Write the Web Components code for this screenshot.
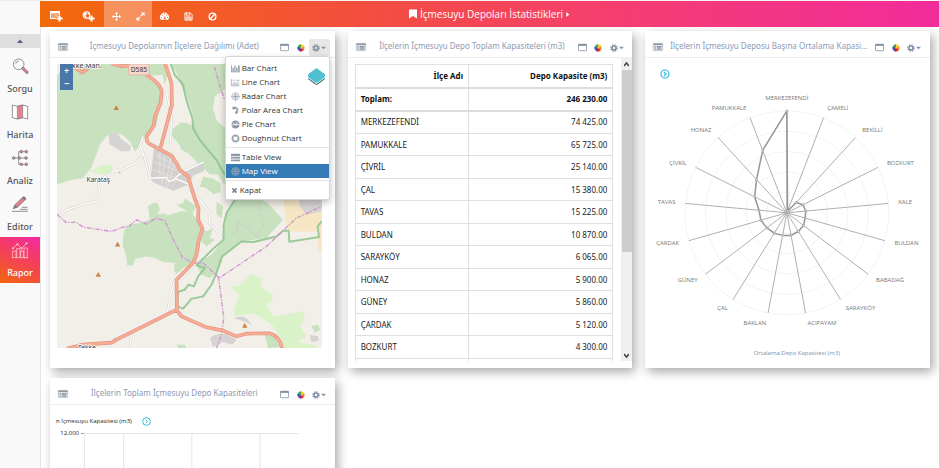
<!DOCTYPE html>
<html lang="tr">
<head>
<meta charset="utf-8">
<title>İçmesuyu Depoları İstatistikleri</title>
<style>
  html, body { margin: 0; height: 100%; overflow: hidden; }
  body { font-family: "Open Sans", "Noto Sans", sans-serif; background: #fff; color: #222; }
</style>
</head>
<body>
<report-app></report-app>

<script>
const svg = (box, body, extra = '') => `<svg viewBox="${box}" aria-hidden="true" ${extra}>${body}</svg>`;

const ICONS = {
  addTable: svg('0 0 26 20', '<path fill="currentColor" fill-rule="evenodd" d="M1 0h18q1 0 1 1v7h-4v4h-4v4H1q-1 0-1-1V1q0-1 1-1zM2 5v9h9v-3h4V7h3V5zM3 7h3v2H3zM7 7h7v2H7zM3 11h3v2H3zM7 11h3v2H7z"/><path fill="currentColor" d="M17 9h4v4h4v4h-4v4h-4v-4h-4v-4h4z"/>'),
  addGlobe: svg('0 0 26 20', '<circle cx="9" cy="8" r="7" fill="none" stroke="currentColor" stroke-width="2"/><path fill="currentColor" d="M3 4l5-2 3 2-1 3-3 1 1 3 3 2-2 2-4-3-2-4zM13 2l3 3v4l-3-2-1-3zM17 9h4v4h4v4h-4v4h-4v-4h-4v-4h4z"/>'),
  move: svg('0 0 20 20', '<path fill="currentColor" d="M10 0l4 4h-3v5h5V6l4 4-4 4v-3h-5v5h3l-4 4-4-4h3v-5H4v3l-4-4 4-4v3h5V4H6z"/>'),
  resize: svg('0 0 20 20', '<path fill="currentColor" d="M19 1v8l-3-3-4 4-2-2 4-4-3-3zM1 19v-8l3 3 4-4 2 2-4 4 3 3z"/>'),
  dash: svg('0 0 20 20', '<path fill="currentColor" fill-rule="evenodd" d="M2 17a10 9.500 0 1 1 16 0zM9 3v2.500h2V3zM4 6v2h2.500V6zM13.500 6v2H16V6zM2 11v2h2.500v-2zM15.500 11v2H18v-2zM11 8l-1.500 4.500a2 2 0 1 0 2.500 0z"/>'),
  save: svg('0 0 20 20', '<path fill="none" stroke="currentColor" stroke-width="2" d="M2 2h12l4 4v12H2zM5 2v5h8V2M5 18v-7h10v7M7 13h6M7 15.500h6"/>'),
  ban: svg('0 0 20 20', '<g fill="none" stroke="currentColor" stroke-width="3"><circle cx="10" cy="10" r="7.500"/><path d="M15 5L5 15"/></g>'),
  bookmark: svg('0 0 16 20', '<path fill="currentColor" d="M0 1h16v18l-8-5-8 5z"/>'),
  caretRight: svg('0 0 8 12', '<path fill="currentColor" d="M0 0l7 6-7 6z"/>'),
  caretUp: svg('0 0 12 8', '<path fill="#55607c" d="M0 8l6-7 6 7z"/>'),
  caretDown: svg('0 0 12 8', '<path fill="currentColor" d="M0 1h12l-6 6z"/>'),
  list: svg('0 0 28 22', '<rect x="1" y="1" width="26" height="20" rx="2" fill="#fff" stroke="#a3adb8" stroke-width="2"/><path fill="#8c98a5" d="M1 1h26v5H1zM4 8h4v3H4zM10 8h14v3H10zM4 12h4v3H4zM10 12h14v3H10zM4 16h4v3H4zM10 16h14v3H10z"/>'),
  win: svg('0 0 28 24', '<rect x="1.500" y="2" width="25" height="20" rx="2" fill="#fff" stroke="#8492a6" stroke-width="2.500"/><path fill="#8492a6" d="M1 1h26v6H1z"/>'),
  wheel: svg('-12 -12 24 24', '<path fill="#f7d21b" d="M0 0V-11A11 11 0 0 1 9.500-5.500z"/><path fill="#f39019" d="M0 0L9.500-5.500A11 11 0 0 1 9.500 5.500z"/><path fill="#e2332b" d="M0 0L9.500 5.500A11 11 0 0 1 0 11z"/><path fill="#8a278f" d="M0 0V11A11 11 0 0 1-9.500 5.500z"/><path fill="#2a4ea8" d="M0 0L-9.500 5.500A11 11 0 0 1-9.500-5.500z"/><path fill="#3ea54a" d="M0 0L-9.500-5.500A11 11 0 0 1 0-11z"/>'),
  gear: svg('-12 -12 24 24', '<circle r="6" fill="none" stroke="#8492a6" stroke-width="5"/><circle r="9.500" fill="none" stroke="#8492a6" stroke-width="4" stroke-dasharray="4 3.460"/>'),
  search: svg('0 0 48 48', '<g fill="none" stroke="#7d7d7d" stroke-width="2.500"><circle cx="20" cy="19" r="16"/><path d="M11 17q2-8 9-8"/></g><path d="M33 31l12 12" stroke="#7d7d7d" stroke-width="9" stroke-linecap="round"/><path d="M34 32l11 11" stroke="#e8808c" stroke-width="5.500" stroke-linecap="round"/>'),
  map: svg('0 0 48 48', '<path fill="#fff" stroke="#7d7d7d" stroke-width="2.500" stroke-linejoin="round" d="M1 3l15 4 16-4 15 4v38l-15-4-16 4-15-4z"/><path fill="#e8808c" stroke="#7d7d7d" stroke-width="2" d="M16 7l16-4v38l-16 4z"/>'),
  flow: svg('0 0 48 48', '<path fill="none" stroke="#7d7d7d" stroke-width="2.500" d="M5 24h38M42 5H20v38h22M22 24"/><g fill="#e8808c" stroke="#7d7d7d" stroke-width="2.500"><circle cx="5" cy="24" r="4"/><circle cx="22" cy="24" r="4"/><circle cx="42" cy="24" r="4"/><circle cx="28" cy="5" r="4"/><circle cx="43" cy="5" r="4"/><circle cx="28" cy="43" r="4"/><circle cx="43" cy="43" r="4"/></g>'),
  pen: svg('0 0 48 48', '<path fill="#e8808c" stroke="#7d7d7d" stroke-width="2.500" stroke-linejoin="round" d="M4 38l5-12L34 2q5 0 8 7L17 33z"/><path fill="#7d7d7d" d="M4 38l5-12 8 7zM30 6l4-4q5 0 8 7l-4 4z"/><path stroke="#7d7d7d" stroke-width="2.500" d="M0 46h48M24 40h23M30 34h17"/>'),
  report: svg('0 0 48 48', '<g fill="none" stroke="#ffc4c9" stroke-width="2.500"><path d="M2 47V27h10v20M14 47V20h10v27M26 47V27h8v20M36 47V18h10v29zM0 47h48"/><path d="M3 19l13-12 13 13L44 3"/></g><g fill="#ffc4c9"><circle cx="3" cy="19" r="3"/><circle cx="16" cy="7" r="3"/><circle cx="29" cy="19" r="3"/><circle cx="44" cy="4" r="3"/></g>'),
  bar: svg('0 0 24 24', '<path fill="#8494a2" d="M0 3h2v18H0zM0 20h24v2H0zM4 10h3v9H4zM9 4h3v15H9zM14 9h3v10h-3zM19 4h4v15h-4z"/>'),
  line: svg('0 0 24 24', '<path fill="none" stroke="#94a2ae" stroke-width="2" d="M1 3v18h22M4 6h3M9 6h3M14 6h8M4 16l5-5 5 4 8-6M4 18l6-2 4 2 8-2"/>'),
  radar: svg('-12 -12 24 24', '<g fill="none" stroke="#a4b0bb" stroke-width="1.800"><circle r="10"/><circle r="6"/><path d="M-12 0h24M0-12v24"/></g><circle r="3" fill="#8494a2"/>'),
  polar: svg('0 0 24 24', '<path fill="#8a98a6" d="M4 2h8a9 10 0 0 1 3 19l-4-1 1-6 3-2-2-4-9 1z"/><path stroke="#fff" stroke-width="1.500" d="M13 8l5-5M15 12h7"/>'),
  pie: svg('0 0 24 24', '<circle cx="12" cy="12" r="10.500" fill="#8a98a6"/><path fill="none" stroke="#fff" stroke-width="2" d="M12 12L4 7M12 12h11M12 12l6-8M2 14l10-2 3 4"/>'),
  ring: svg('-12 -12 24 24', '<circle r="8" fill="none" stroke="#9aa7b3" stroke-width="5"/><path stroke="#fff" stroke-width="1.500" d="M-5-5l-5-5M5-5l5-5M-5 5l-5 5M5 5l5 5"/>'),
  rows: svg('0 0 24 24', '<path fill="#8a98a6" d="M0 2h24v6H0zM0 10h24v5H0zM0 17h24v5H0z"/><path stroke="#e6eaed" d="M6 10v12M0 9h24M0 16h24"/>'),
  globe: svg('-12 -12 24 24', '<g fill="#5f86a8" stroke="#8fa9c0" stroke-width="1.500"><circle r="10.500"/><path fill="none" d="M-10 0h20M-9-5H9M-9 5H9M0-10v20"/></g>'),
  close: svg('0 0 24 24', '<path stroke="#7c8b98" stroke-width="6" d="M5 5l14 14M19 5L5 19"/>'),
  next: svg('-14 -14 28 28', '<circle r="12" fill="none" stroke="#27bbe0" stroke-width="3"/><path fill="none" stroke="#27bbe0" stroke-width="3" d="M-2-5l5 5-5 5"/>'),
  layers: svg('0 0 50 50', '<path fill="#2c5a68" d="M1 29l24 17 24-17v4L27 49h-4L1 33z"/><path fill="#fff" d="M0 26l25 19 25-19v3L25 47 0 29z"/><path fill="#4fc0cf" d="M22 2q3-2 6 0l19 14q3 2 3 5v4q0 2-3 4L29 42q-4 2-8 0L3 29q-3-2-3-4v-4q0-3 3-5z"/>'),
};

const define = (name, html, setup) => {
  const template = document.createElement('template');
  template.innerHTML = html;
  customElements.define(name, class extends HTMLElement {
    connectedCallback() {
      if (this.shadowRoot) return;
      this.attachShadow({ mode: 'open' }).append(template.content.cloneNode(true));
      if (setup) setup(this, this.shadowRoot);
    }
  });
};

define('ui-icon', `
  <style>
    :host { display: inline-flex; width: 9px; height: 9px; flex: none; }
    svg { width: 100%; height: 100%; display: block; overflow: visible; }
  </style>`, (host, root) => {
  root.append(document.createRange().createContextualFragment(ICONS[host.getAttribute('name')]));
});

define('nav-item', `
  <style>
    :host { display: block; }
    a { display: flex; flex-direction: column; align-items: center; gap: 9px; height: 46px; box-sizing: border-box;
        padding-top: 5px; color: #555; text-decoration: none; font-family: "Noto Sans", sans-serif; font-size: 9px; line-height: 12px; font-weight: 500; }
    ui-icon { width: 16px; height: 16px; }
    :host([active]) a { color: #fff; background: linear-gradient(25deg, #f3660f 0%, #f43f5c 55%, #f12aa2 100%); }
  </style>
  <a href="#"><ui-icon></ui-icon><slot></slot></a>`, (host, root) => {
  const icon = document.createElement('ui-icon');
  icon.setAttribute('name', host.getAttribute('icon'));
  root.querySelector('ui-icon').replaceWith(icon);
});

define('side-nav', `
  <style>
    :host { display: flex; flex-direction: column; width: 40px; flex: none; box-sizing: border-box; background: #f9f9f9;
            box-shadow: 1px 0 0 #e4e4e6; border-top: 1px solid #eee; padding-top: 33px; }
    button { border: 0; padding: 0; margin-bottom: 5px; height: 14px; background: #dedede; display: flex; align-items: center; justify-content: center; }
    button ui-icon { width: 6px; height: 4px; }
  </style>
  <button aria-label="Yukarı"><ui-icon name="caretUp"></ui-icon></button>
  <nav>
    <nav-item icon="search">Sorgu</nav-item>
    <nav-item icon="map">Harita</nav-item>
    <nav-item icon="flow">Analiz</nav-item>
    <nav-item icon="pen">Editor</nav-item>
    <nav-item icon="report" active>Rapor</nav-item>
  </nav>`);

define('top-bar', `
  <style>
    :host { display: grid; grid-template-columns: 1fr auto 1fr; height: 27px; box-sizing: border-box; border-top: 1px solid #f4f4f4; color: #fff;
            background: linear-gradient(90deg, #f26a0b 0%, #f34f3d 35%, #f53d72 65%, #f22c9b 100%); }
    .tools { display: flex; }
    button { border: 0; padding: 4px 0 0; width: 24px; height: 26px; background: none; color: inherit; display: flex; align-items: center; justify-content: center; }
    .add button { width: 32px; }
    .add ui-icon { width: 13px; height: 10px; }
    .mode { background: rgba(255,255,255,.3); }
    .add, .mode { display: flex; }
    h1 { margin: 0; font-size: 10px; line-height: 26px; font-weight: 400; display: flex; align-items: center; gap: 3px; }
    .mark { width: 8px; height: 10px; }
    .end { width: 4px; height: 5px; }
  </style>
  <div class="tools">
    <div class="add">
      <button aria-label="Tablo ekle"><ui-icon name="addTable"></ui-icon></button>
      <button aria-label="Harita ekle"><ui-icon name="addGlobe"></ui-icon></button>
    </div>
    <div class="mode">
      <button aria-label="Taşı"><ui-icon name="move"></ui-icon></button>
      <button aria-label="Boyutlandır"><ui-icon name="resize"></ui-icon></button>
    </div>
    <button aria-label="Pano"><ui-icon name="dash"></ui-icon></button>
    <button aria-label="Kaydet"><ui-icon name="save"></ui-icon></button>
    <button aria-label="İptal"><ui-icon name="ban"></ui-icon></button>
  </div>
  <h1><ui-icon class="mark" name="bookmark"></ui-icon>İçmesuyu Depoları İstatistikleri<ui-icon class="end" name="caretRight"></ui-icon></h1>`);

define('dash-card', `
  <style>
    :host { display: flex; flex-direction: column; position: relative; min-width: 0; height: 337px; background: #fff;
            box-shadow: 3px 4px 10px rgba(0,0,0,.34); }
    header { display: flex; align-items: center; height: 27px; box-sizing: border-box; flex: none; border-bottom: 1px solid #eee; padding: 0 5px 0 8px; }
    h2 { flex: 1; min-width: 0; margin: 3px 3px 0 7px; font-family: "Noto Sans", sans-serif; font-size: 8px; line-height: 20px; font-weight: 400; color: #8d9ab6; text-align: center;
         overflow: hidden; white-space: nowrap; text-overflow: ellipsis; }
    .list { width: 10px; height: 8px; margin-top: 5px; }
    button { border: 0; padding: 0; margin-top: 7px; background: none; height: 17px; color: #8492a6; display: flex; align-items: center; justify-content: center; gap: 1px; }
    .b { width: 16px; }
    .gear { width: 21px; border-radius: 2px; }
    .gear ui-icon + ui-icon { width: 5px; height: 4px; }
    .wheel ui-icon, .gear ui-icon:first-child { width: 8px; height: 8px; }
    :host([open]) .gear { background: #e6e6e6; }
    .body { flex: 1; min-height: 0; display: flex; flex-direction: column; }
  </style>
  <header>
    <ui-icon class="list" name="list"></ui-icon>
    <h2></h2>
    <button class="b" aria-label="Pencere"><ui-icon name="win"></ui-icon></button>
    <button class="b wheel" aria-label="Renkler"><ui-icon name="wheel"></ui-icon></button>
    <button class="gear" aria-label="Ayarlar"><ui-icon name="gear"></ui-icon><ui-icon name="caretDown"></ui-icon></button>
  </header>
  <div class="body"><slot></slot></div>
  <slot name="menu"></slot>`, (host, root) => {
  root.querySelector('h2').textContent = host.getAttribute('heading');
});

define('menu-item', `
  <style>
    :host { display: block; }
    button { width: 100%; border: 0; background: none; font: inherit; font-size: 8px; line-height: 14px; height: 14px; color: #333;
             padding: 0 5px; display: flex; align-items: center; gap: 2px; text-align: left; white-space: nowrap; }
    :host([active]) button { background: #337ab7; color: #fff; }
    :host([small]) ui-icon { width: 7px; height: 7px; }
  </style>
  <button role="menuitem"><ui-icon></ui-icon><slot></slot></button>`, (host, root) => {
  const icon = document.createElement('ui-icon');
  icon.setAttribute('name', host.getAttribute('icon'));
  root.querySelector('ui-icon').replaceWith(icon);
});

define('chart-menu', `
  <style>
    :host { position: absolute; top: 25px; right: 5px; width: 105px; box-sizing: border-box; padding: 4px 0 2px; background: #fff;
            border: 1px solid #d6d6d6; border-radius: 2px; box-shadow: 0 3px 7px rgba(0,0,0,.25); z-index: 2; }
    hr { border: 0; border-top: 1px solid #e2e2e2; margin: 2px 0; }
    .layer { position: absolute; right: 4px; top: 11px; border: 0; padding: 0; background: none; }
    .layer ui-icon { width: 17px; height: 17px; }
  </style>
  <div role="menu">
    <menu-item icon="bar">Bar Chart</menu-item>
    <menu-item icon="line">Line Chart</menu-item>
    <menu-item icon="radar">Radar Chart</menu-item>
    <menu-item icon="polar">Polar Area Chart</menu-item>
    <menu-item icon="pie">Pie Chart</menu-item>
    <menu-item icon="ring">Doughnut Chart</menu-item>
    <hr>
    <menu-item icon="rows">Table View</menu-item>
    <menu-item icon="globe" active>Map View</menu-item>
    <hr>
    <menu-item icon="close" small>Kapat</menu-item>
  </div>
  <button class="layer" aria-label="Katmanlar"><ui-icon name="layers"></ui-icon></button>`);

define('district-map', `
  <style>
    :host { display: block; position: relative; margin: 6px 13px 0 7px; height: 284px; overflow: hidden; background: #f2efe9; }
    svg { display: block; width: 100%; height: 100%; font-family: "Noto Sans", sans-serif; }
    .zoom { position: absolute; left: 3px; top: 0; width: 13px; display: flex; flex-direction: column; background: #4a76a8; }
    .zoom button { border: 0; padding: 0; height: 13px; background: none; color: #fff; font: 700 9px/12px "Noto Sans", sans-serif; text-align: center; }
    .forest { fill: #c8e1bf; }
    .park { fill: #daf2c7; }
    .stone { fill: #d5d4d3; }
    .sand { fill: #f6e6c4; }
    .town { fill: #d3d1cf; }
    .land { fill: #f2efe9; }
    .minor path { fill: none; stroke: #fff; stroke-width: 4; stroke-linejoin: round; }
    .minor .case { stroke: #d2cfcb; stroke-width: 7; }
    .trunk path { fill: none; stroke-linejoin: round; stroke-linecap: round; }
    .trunk .c { stroke: #df9580; stroke-width: 11; }
    .trunk .f { stroke: #f9ab94; stroke-width: 7; }
    .green path { fill: none; stroke: #8cc48b; stroke-width: 6; stroke-linejoin: round; opacity: .85; }
    .edge path { fill: none; stroke: #cf94d0; stroke-width: 4; stroke-dasharray: 14 4 4 4; }
    .peak path { fill: #d08242; }
    text { fill: #333; stroke: #fff; stroke-width: 4; paint-order: stroke; stroke-linejoin: round; }
  </style>
  <svg viewBox="21 27 795 854" preserveAspectRatio="xMinYMin slice" role="img" aria-label="Harita">
    <path class="forest" d="M21 27H345L352 60 340 110 332 190 300 235 285 242 272 270 255 290 240 260 218 240 190 233 172 242 150 268 135 310 122 342 98 370 60 376 21 388z"/>
    <path class="land" d="M300 62L338 60 352 120 330 270 298 250 322 200 338 110zM21 27H60L40 42 21 60z"/>
    <path class="forest" d="M362 27H816V130L640 420 590 440 520 385 505 360 480 358 462 342 448 330 430 310 415 295 396 285 384 262 370 250 364 235 368 222 382 212 392 203 412 205 428 212 432 190 420 150 410 120 395 95 385 65 376 45z"/>
    <path class="land" d="M528 100L495 125 490 160 500 195 528 222z"/>
    <path class="forest" d="M558 430L530 475 521 555 480 592 440 632 455 660 480 670 500 655 517 605 575 560 650 550 700 495 655 445 630 430z"/>
    <path class="forest" d="M236 510L268 505 300 495 294 455 320 443 330 462 322 478 345 475 352 482 400 468 428 475 445 500 456 530 448 590 428 630 400 640 380 658 372 648 375 625 340 622 315 610 290 605 255 612 250 632 232 632 228 600 218 570 222 528z"/>
    <path class="forest" d="M460 365L490 372 512 385 512 412 490 418 470 400 450 395zM405 430L440 455 425 480 405 465 380 450 400 445zM500 440L520 455 515 490 500 478zM296 452L312 444 325 450 328 468 308 470zM455 520L470 530 490 520 480 548 495 555 470 575 455 560zM645 840L675 842 690 878 655 880zM380 870L405 870 410 881 385 881zM785 815L805 810 812 825 795 835z"/>
    <path class="sand" d="M698 400H816V592L804 585 806 530 720 530 716 528 708 500z"/>
    <path class="stone" d="M748 430L785 432 816 400V470L770 480 750 455zM176 237L200 232 214 252 244 275 240 288 215 290 178 268zM552 792Q585 772 607 812 580 795 552 792zM480 850Q500 835 530 838L560 855 548 870 520 862 490 878zM780 840L805 845 808 858 785 862z"/>
    <path class="park" d="M540 697L565 695 605 657 640 675 632 695 672 722 665 740 650 748 670 785 700 780 760 770 765 795 750 815 772 845 742 862 800 872V881H700L685 840 668 812 640 792 610 775 555 785 552 765 570 722 555 710z"/>
    <path class="park" d="M118 350L160 328 190 332 185 352 158 360z"/>
    <path class="town" d="M312 280L362 305 385 345 398 352 448 322 462 330 462 350 430 362 418 388 370 408 310 382 302 370z"/>
    <g fill="none" stroke="#eceae7" stroke-width="2"><path d="M330 285v90M345 300l-8 90M362 310l-15 85M310 320l80 30M308 345l85 30M320 300l60 35M372 330l-20 70M390 350l-25 50"/></g>
    <g class="minor">
      <path class="case" d="M280 245L270 270 282 300 255 325 215 345 190 350 160 368 145 380 150 415 138 440 95 450 50 465 21 490M282 300L300 370 350 368 358 380 378 372 410 385 440 400 432 420 455 440 470 460 482 470 478 500 520 555M375 370L400 350 462 322M520 555L480 600 440 625 410 655 380 690M362 270L365 190 352 120"/>
      <path d="M280 245L270 270 282 300 255 325 215 345 190 350 160 368 145 380 150 415 138 440 95 450 50 465 21 490M282 300L300 370 350 368 358 380 378 372 410 385 440 400 432 420 455 440 470 460 482 470 478 500 520 555M375 370L400 350 462 322M520 555L480 600 440 625 410 655 380 690M362 270L365 190 352 120"/>
      <path class="case" d="M380 660L362 720 352 775M246 835L238 881M200 850L165 881"/>
      <path d="M380 660L362 720 352 775M246 835L238 881M200 850L165 881"/>
    </g>
    <path fill="none" stroke="#c9c6cf" stroke-width="2" d="M545 540L560 530 568 500 580 515 600 520 620 550 640 510 632 470 625 440"/>
    <g class="green">
      <path d="M363 27L375 60 400 90 406 120 416 155 428 190 430 220 450 255 470 280 500 315 522 355 545 380M558 430L530 475 522 510 521 555 480 592 440 632 465 640 445 665 432 695 416 690 405 705 384 712 382 755 400 762 425 732 460 725 485 690 500 655 517 605 575 560 610 562 680 545 700 528H717L719 561 808 547 804 515 816 500"/>
    </g>
    <g class="edge"><path d="M494 35L508 85 524 135M21 478L48 503 78 502 100 517 185 530 218 518 238 514 260 495 290 508 318 490 345 498 368 550 398 608 430 625 460 625 482 645 508 670 650 575 740 490 816 455M506 665L522 790 515 840 500 881"/></g>
    <g class="trunk">
      <path class="c" d="M190 27L215 34 245 30M75 38L98 52 122 34M290 60Q340 90 335 118L332 145 315 185 312 212 290 245Q288 260 300 268L365 302 382 328 390 345 415 365 425 400 435 432 446 460 445 495 458 522 446 560 440 600 430 625 395 660 380 675 381 765 200 855 185 864 100 870 55 881M382 768L395 785 470 818 520 828 560 845 590 837 660 836Q690 845 697 881M346 27L365 85 366 150 333 275"/>
      <path class="f" d="M190 27L215 34 245 30M75 38L98 52 122 34M290 60Q340 90 335 118L332 145 315 185 312 212 290 245Q288 260 300 268L365 302 382 328 390 345 415 365 425 400 435 432 446 460 445 495 458 522 446 560 440 600 430 625 395 660 380 675 381 765 200 855 185 864 100 870 55 881M382 768L395 785 470 818 520 828 560 845 590 837 660 836Q690 845 697 881M346 27L365 85 366 150 333 275"/>
    </g>
    <g class="peak"><path d="M191 165l8-14 8 14zM195 575l8-14 8 14zM137 666l8-14 8 14zM577 819l8-14 8 14z"/></g>
    <rect x="236" y="27" width="62" height="33" rx="5" fill="#f7d6cc" stroke="#e0a797" stroke-width="2"/>
    <text x="267" y="51" font-size="20" text-anchor="middle" style="stroke:none">D585</text>
    <text x="145" y="381" font-size="20" text-anchor="middle">Karataş</text>
    <text x="66" y="38" font-size="21">kke Mah.</text>
    <text x="84" y="886" font-size="20">Tekke</text>
    <path stroke="#9ccbe0" stroke-width="3" d="M207 350l4 8"/>
  </svg>
  <div class="zoom"><button aria-label="Yakınlaştır">+</button><button aria-label="Uzaklaştır">−</button></div>`);

const CAPACITY = [
  ['MERKEZEFENDİ', '74 425.00'], ['PAMUKKALE', '65 725.00'], ['ÇİVRİL', '25 140.00'], ['ÇAL', '15 380.00'],
  ['TAVAS', '15 225.00'], ['BULDAN', '10 870.00'], ['SARAYKÖY', '6 065.00'], ['HONAZ', '5 900.00'],
  ['GÜNEY', '5 860.00'], ['ÇARDAK', '5 120.00'], ['BOZKURT', '4 300.00'],
];

define('capacity-table', `
  <style>
    :host { display: flex; height: 303px; overflow: hidden; color: #222; }
    .view { flex: 1; min-width: 0; overflow: hidden; padding: 6px 8px 0 7px; }
    table { width: 100%; border-collapse: collapse; table-layout: fixed; font-family: "Noto Sans", sans-serif; font-size: 8px; line-height: 12px; }
    th, td { box-sizing: border-box; height: 23px; padding: 0 5px; border: 1px solid #e0e0e0; text-align: right; font-weight: 400; white-space: nowrap; }
    th:first-child { width: 44%; }
    tr > :first-child { text-align: left; }
    thead th, .sum > * { font-weight: 700; color: #111; border-bottom: 2px solid #ddd; }
    thead th:first-child { text-align: right; }
    tbody tr:nth-child(2n + 3) > * { height: 22px; }
    .bar { width: 11px; background: #f0f0f0; display: flex; flex-direction: column; align-items: center; }
    .bar i { width: 10px; flex: 183; background: #cdcdcd; }
    .bar b { flex: 97; }
    .bar svg { width: 5px; height: 12px; }
  </style>
  <div class="view"><table>
    <thead><tr><th scope="col">İlçe Adı</th><th scope="col">Depo Kapasite (m3)</th></tr></thead>
    <tbody><tr class="sum"><th scope="row">Toplam:</th><td>246 230.00</td></tr></tbody>
  </table></div>
  <div class="bar" aria-hidden="true">
    <svg viewBox="0 0 5 12"><path d="M0 8l2.500-3L5 8" fill="none" stroke="#444" stroke-width="1.500"/></svg>
    <i></i><b></b>
    <svg viewBox="0 0 5 12"><path d="M0 5l2.500 3L5 5" fill="none" stroke="#444" stroke-width="1.500"/></svg>
  </div>`, (host, root) => {
  const body = root.querySelector('tbody');
  for (const [name, value] of [...CAPACITY, ['', '']]) {
    const row = body.insertRow();
    row.insertCell().textContent = name;
    row.insertCell().textContent = value;
  }
});

const RADAR = [
  ['MERKEZEFENDİ', 102], ['ÇAMELİ', 2], ['BEKİLLİ', 14], ['BOZKURT', 18], ['KALE', 19], ['BULDAN', 19], ['BABADAĞ', 21],
  ['SARAYKÖY', 22], ['ACIPAYAM', 23], ['BAKLAN', 23], ['ÇAL', 24], ['GÜNEY', 25], ['ÇARDAK', 27], ['TAVAS', 28],
  ['ÇİVRİL', 36], ['HONAZ', 45], ['PAMUKKALE', 67],
];

define('radar-chart', `
  <style>
    :host { display: block; }
    svg { display: block; width: 100%; }
    text { font-size: 6px; fill: #777; }
    .legend { fill: #8190b0; }
    circle { fill: none; stroke: #f3f3f3; }
    .axis { stroke: #b0b0b0; }
    .area { fill: none; stroke: #959595; stroke-width: 1.500; stroke-linejoin: round; }
    .dot { fill: #fff; stroke: #a0a0a0; stroke-width: 1; }
    .next circle, .next path { fill: none; stroke: #27bbe0; stroke-width: 1.200; }
  </style>
  <svg viewBox="0 0 285 309" role="img" aria-label="Ortalama Depo Kapasitesi (m3)"></svg>`, (host, root) => {
  const cx = 142, cy = 155, R = 102;
  const at = (i, r) => {
    const a = i * 2 * Math.PI / RADAR.length;
    return [cx + r * Math.sin(a), cy - r * Math.cos(a)];
  };
  let out = '';
  for (let k = 1; k <= 5; k++) out += `<circle cx="${cx}" cy="${cy}" r="${R * k / 5}"/>`;
  RADAR.forEach((d, i) => {
    const [x, y] = at(i, R);
    out += `<line class="axis" x1="${cx}" y1="${cy}" x2="${x}" y2="${y}"/>`;
  });
  out += `<polygon class="area" points="${RADAR.map((d, i) => at(i, d[1]).join()).join(' ')}"/>`;
  RADAR.forEach(([name, v], i) => {
    const [px, py] = at(i, v), [x, y] = at(i, i ? 112 : 115);
    const anchor = i === 0 ? 'middle' : i <= 8 ? 'start' : 'end';
    out += `<circle class="dot" cx="${px}" cy="${py}" r="1"/><text x="${x}" y="${y + 2}" text-anchor="${anchor}">${name}</text>`;
  });
  out += `<text class="legend" x="152" y="297" text-anchor="middle">Ortalama Depo Kapasitesi (m3)</text>
    <g class="next"><circle cx="20" cy="16" r="4"/><path d="M19 14l2 2-2 2"/></g>`;
  root.querySelector('svg').innerHTML = out;
});

define('line-chart', `
  <style>
    :host { display: block; padding: 10px 6px 0; font-size: 6px; color: #222; }
    .key { display: flex; align-items: center; gap: 10px; line-height: 12px; }
    .plot { display: grid; grid-template-columns: 24px 1fr 30px; line-height: 12px; }
    .plot span { text-align: right; padding-right: 1px; }
    svg { display: block; width: 100%; height: 220px; margin-top: 6px; overflow: visible; }
  </style>
  <div class="key">n İçmesuyu Kapasitesi (m3) <ui-icon name="next"></ui-icon></div>
  <div class="plot"><span>12,000</span>
    <svg viewBox="0 0 218 220" preserveAspectRatio="none" aria-hidden="true">
      <path d="M4 .500H218M4.500 0V220M43.500 0V220M111.500 0V220M179.500 0V220" fill="none" stroke="#e6e6e6"/>
      <path d="M1 .500h3" stroke="#9a98c8"/>
    </svg>
  </div>`);

define('report-app', `
  <style>
    :host { display: flex; height: 100vh; overflow: hidden; }
    main { flex: 1; min-width: 0; display: flex; flex-direction: column; overflow: hidden; }
    .grid { flex: 1; min-height: 0; overflow: hidden; box-sizing: border-box; display: grid; grid-auto-rows: max-content; grid-template-columns: repeat(3, minmax(0, 1fr)); gap: 10px 13px; padding: 4px 9px 0 10px; }
  </style>
  <side-nav></side-nav>
  <main>
    <top-bar></top-bar>
    <div class="grid">
      <dash-card open heading="İçmesuyu Depolarının İlçelere Dağılımı (Adet)"><district-map></district-map><chart-menu slot="menu"></chart-menu></dash-card>
      <dash-card heading="İlçelerin İçmesuyu Depo Toplam Kapasiteleri (m3)"><capacity-table></capacity-table></dash-card>
      <dash-card heading="İlçelerin İçmesuyu Deposu Başına Ortalama Kapasiteleri (m3)"><radar-chart></radar-chart></dash-card>
      <dash-card heading="İlçelerin Toplam İçmesuyu Depo Kapasiteleri"><line-chart></line-chart></dash-card>
    </div>
  </main>`);
</script>
</body>
</html>
